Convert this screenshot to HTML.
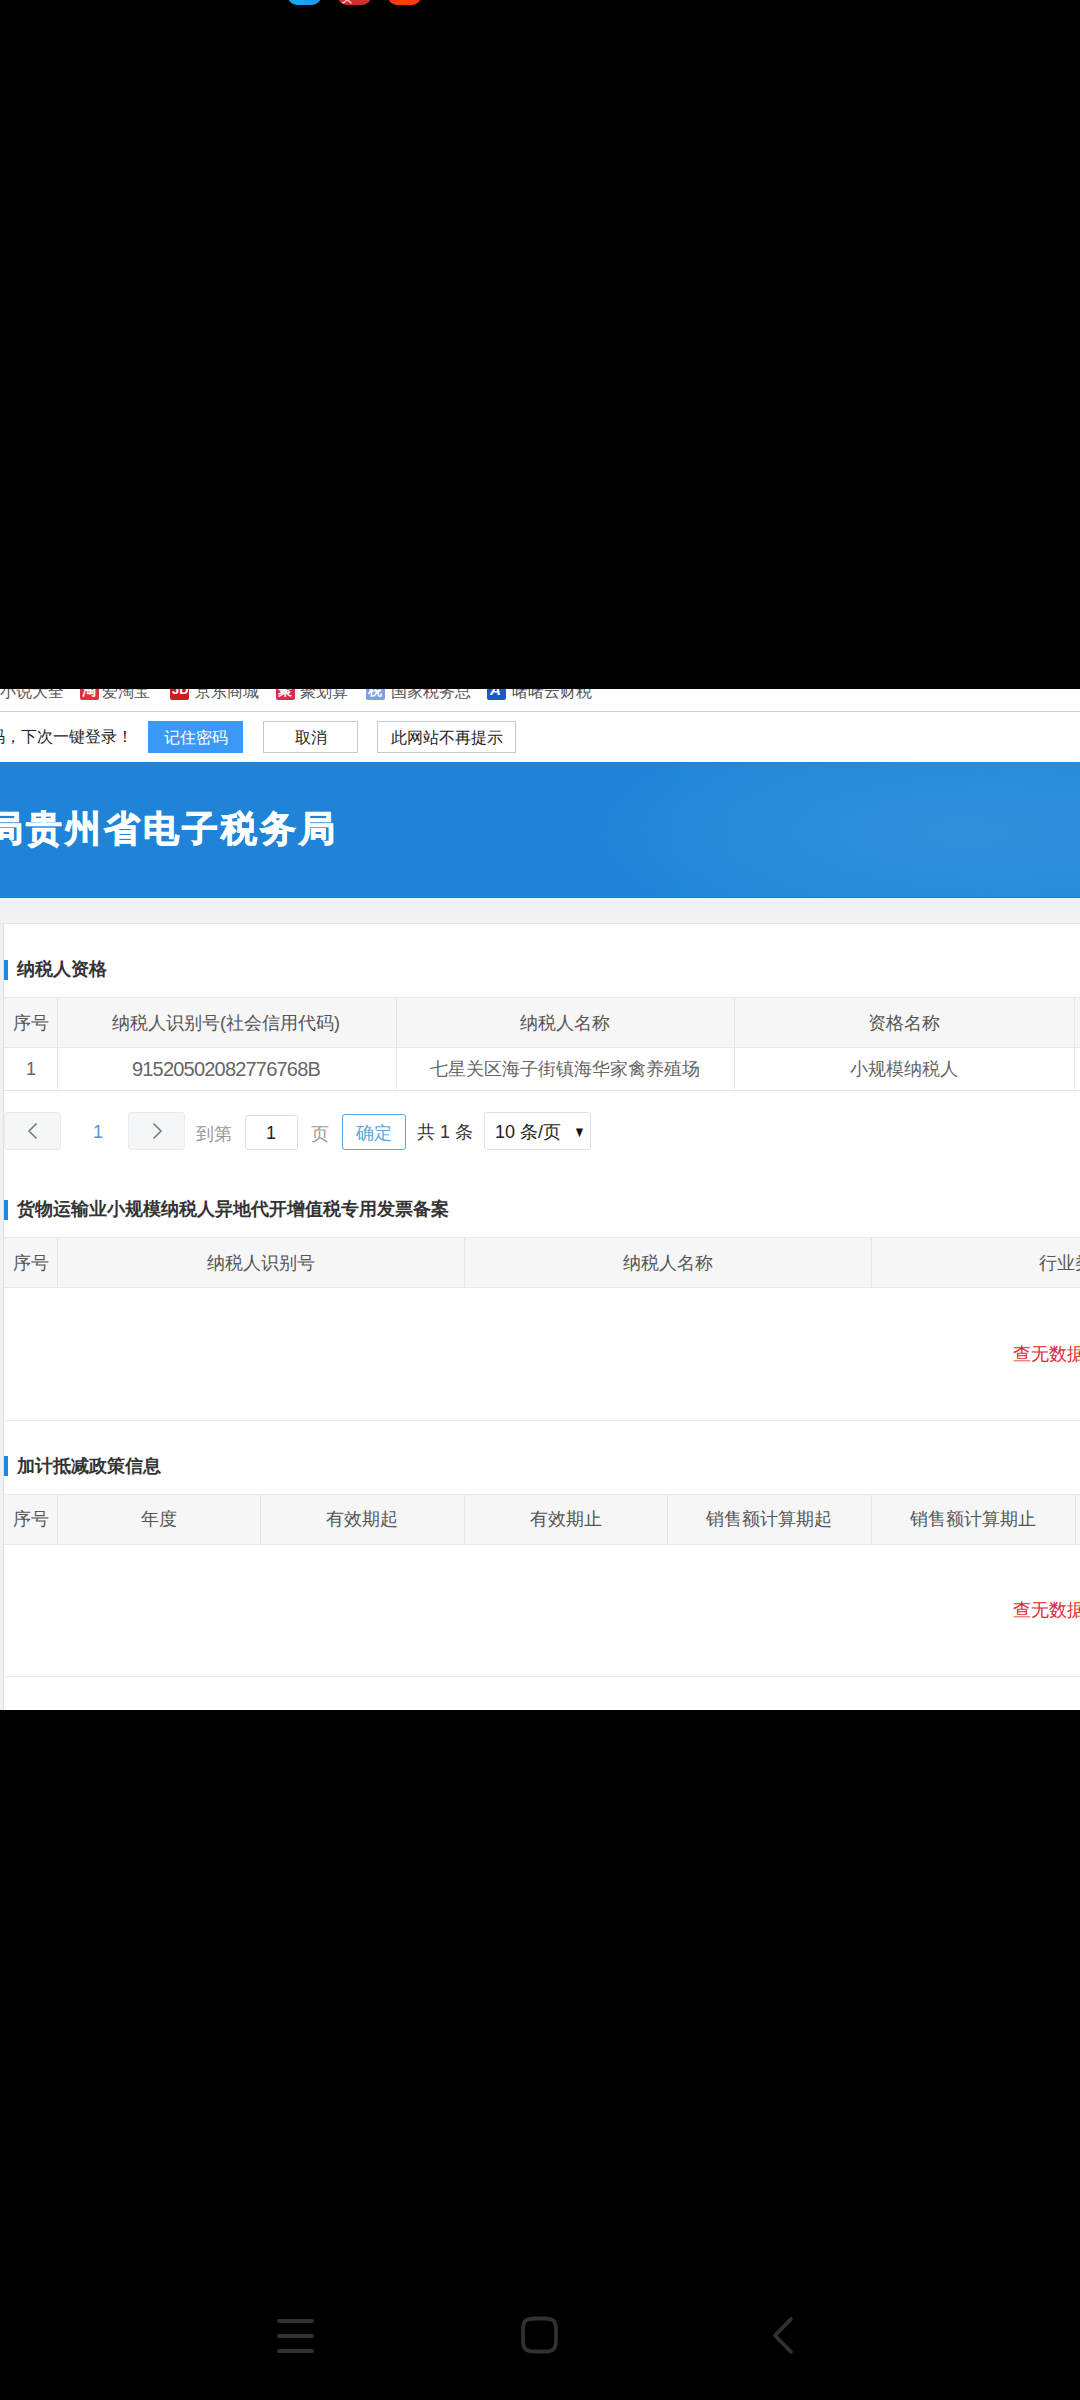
<!DOCTYPE html>
<html><head><meta charset="utf-8">
<style>
*{margin:0;padding:0;box-sizing:border-box}
html,body{width:1080px;height:2400px;background:#000;overflow:hidden;font-family:"Liberation Sans",sans-serif}
.abs{position:absolute}
.appicon{position:absolute;top:-28px;width:33px;height:33px;border-radius:9px}
#shot{position:absolute;left:0;top:689px;width:1080px;height:1021px;background:#fff;overflow:hidden}
.bm{position:absolute;top:-9.5px;font-size:16px;color:#555;white-space:nowrap;line-height:24px}
.bmi{position:absolute;top:-8px;width:19px;height:19px;border-radius:2px;overflow:hidden}
.ig{position:absolute;left:2px;top:1px;font-size:14px;line-height:16px;color:#fff;font-weight:bold}
.btn{position:absolute;top:32px;height:32px;border:1px solid #c8c8c8;background:#fff;font-size:15.5px;color:#222;text-align:center;line-height:32px}
#hdr{position:absolute;left:0;top:73px;width:1080px;height:136px;background:radial-gradient(ellipse 380px 110px at 960px 70px,rgba(255,255,255,0.07),rgba(255,255,255,0) 100%),linear-gradient(90deg,#1f83d8 0,#1f83d8 50%,#2187d9 70%,#2489da 100%);border-bottom:1px solid #2877c2}
#strip{position:absolute;left:0;top:209px;width:1080px;height:26px;background:linear-gradient(#eef3f6,#eff0f2 40%,#f1f2f3);border-bottom:1px solid #e4e4e6}
#panel{position:absolute;left:0;top:235px;width:1080px;height:800px;background:#fff}
.lstrip{position:absolute;left:0;top:235px;width:3px;height:800px;background:#f1f1f1}
.lborder{position:absolute;left:3px;top:235px;width:1px;height:800px;background:#e0e0e0}
.bar{position:absolute;left:4px;width:4px;height:20px;background:#1e88e5}
.ttl{position:absolute;left:17px;font-size:18px;font-weight:bold;color:#333;white-space:nowrap;line-height:20px}
.th{position:absolute;height:51px;background:#f6f6f6;border-top:1px solid #e8e8e8;border-bottom:1px solid #e8e8e8}
.vl{position:absolute;width:1px;background:#e6e6e6}
.hl{position:absolute;height:1px;background:#e6e6e6}
.tx{position:absolute;white-space:nowrap;font-size:18px;color:#555;line-height:20px}
.c{transform:translateX(-50%)}
.nodata{position:absolute;left:1013px;font-size:18px;color:#de2a32;white-space:nowrap;line-height:20px}
</style></head><body>
<!-- top app icons -->
<div class="appicon" style="left:288px;background:linear-gradient(90deg,#16b0f6,#1d95ee)"></div>
<div class="appicon" style="left:338px;background:#d42e2c;overflow:hidden"><span style="position:absolute;left:3px;top:21px;font-size:11px;line-height:11px;color:#f8c8c8;font-weight:bold">头</span></div>
<div class="appicon" style="left:388px;background:#ff3a12"></div>

<div id="shot">
  <!-- bookmarks bar -->
  <div class="bm" style="left:0">小说大全</div>
  <div class="bmi" style="left:80px;background:#e03040"><span class="ig">淘</span></div>
  <div class="bm" style="left:102px">爱淘宝</div>
  <div class="bmi" style="left:170px;background:#c82020"><span class="ig" style="font-family:'Liberation Sans',sans-serif;font-weight:bold;font-size:13px;left:2px">JD</span></div>
  <div class="bm" style="left:195px">京东商城</div>
  <div class="bmi" style="left:276px;background:#e0284a"><span class="ig">聚</span></div>
  <div class="bm" style="left:300px">聚划算</div>
  <div class="bmi" style="left:366px;background:#7b9ee8"><span class="ig">税</span></div>
  <div class="bm" style="left:391px">国家税务总</div>
  <div class="bmi" style="left:487px;background:#1a58c8"><span class="ig" style="font-family:'Liberation Sans',sans-serif;font-weight:bold;font-style:italic;font-size:15px;left:3px">A</span></div>
  <div class="bm" style="left:512px">啫啫云财税</div>
  <div class="hl" style="left:0;top:22px;width:1080px;background:#d0d0d0"></div>

  <!-- save password bar -->
  <div class="tx" style="left:-11px;top:38px;font-size:15.5px;color:#222">码，下次一键登录！</div>
  <div class="btn" style="left:148px;width:95px;background:#3b99f5;border-color:#3b99f5;color:#fff">记住密码</div>
  <div class="btn" style="left:263px;width:95px">取消</div>
  <div class="btn" style="left:377px;width:139px">此网站不再提示</div>

  <!-- header -->
  <div id="hdr">
    <div class="tx" style="left:-13px;top:47px;font-size:36px;font-weight:bold;-webkit-text-stroke:0.9px #fff;color:#fff;line-height:40px;letter-spacing:3px">局贵州省电子税务局</div>
  </div>
  <div id="strip"></div>
  <div id="panel"></div>
  <div class="lstrip"></div>
  <div class="lborder"></div>

  <!-- section 1 -->
  <div class="bar" style="top:271px"></div>
  <div class="ttl" style="top:270px">纳税人资格</div>
  <div class="th" style="left:4px;top:308px;width:1076px"></div>
  <div class="vl" style="left:57px;top:309px;height:92px"></div>
  <div class="vl" style="left:396px;top:309px;height:92px"></div>
  <div class="vl" style="left:734px;top:309px;height:92px"></div>
  <div class="vl" style="left:1074px;top:309px;height:92px"></div>
  <div class="hl" style="left:4px;top:401px;width:1076px"></div>
  <div class="tx c" style="left:31px;top:324px">序号</div>
  <div class="tx c" style="left:226px;top:324px">纳税人识别号(社会信用代码)</div>
  <div class="tx c" style="left:565px;top:324px">纳税人名称</div>
  <div class="tx c" style="left:904px;top:324px">资格名称</div>
  <div class="tx c" style="left:31px;top:370px;font-size:18px;color:#666">1</div>
  <div class="tx c" style="left:226px;top:370px;font-size:20px;letter-spacing:-0.8px;color:#666">91520502082776768B</div>
  <div class="tx c" style="left:565px;top:370px;color:#666">七星关区海子街镇海华家禽养殖场</div>
  <div class="tx c" style="left:904px;top:370px;color:#666">小规模纳税人</div>

  <!-- pagination -->
  <div class="abs" style="left:4px;top:423px;width:57px;height:38px;background:#f5f6f7;border:1px solid #ebebeb;border-radius:3px"></div>
  <div class="abs" style="left:128px;top:423px;width:57px;height:38px;background:#f5f6f7;border:1px solid #ebebeb;border-radius:3px"></div>
  <svg class="abs" style="left:20px;top:430px" width="26" height="24"><path d="M16.5 4.5 L9 12 L16.5 19.5" stroke="#7a7a7a" stroke-width="1.6" fill="none"/></svg>
  <svg class="abs" style="left:144px;top:430px" width="26" height="24"><path d="M9.5 4.5 L17 12 L9.5 19.5" stroke="#7a7a7a" stroke-width="1.6" fill="none"/></svg>
  <div class="tx" style="left:93px;top:433px;font-size:18px;color:#4f99d6">1</div>
  <div class="tx" style="left:196px;top:435px;color:#999">到第</div>
  <div class="abs" style="left:245px;top:426px;width:53px;height:35px;border:1px solid #dcdfe6;border-radius:3px"></div>
  <div class="tx" style="left:266px;top:434px;font-size:18px;color:#222">1</div>
  <div class="tx" style="left:311px;top:435px;color:#999">页</div>
  <div class="abs" style="left:342px;top:425px;width:64px;height:36px;border:1px solid #5aa5e0;border-radius:3px"></div>
  <div class="tx" style="left:356px;top:434px;color:#5aa5e0">确定</div>
  <div class="tx" style="left:417px;top:433px;color:#333;font-size:18px">共 1 条</div>
  <div class="abs" style="left:484px;top:423px;width:107px;height:38px;border:1px solid #e0e0e0;border-radius:3px"></div>
  <div class="tx" style="left:495px;top:433px;color:#222;font-size:18px">10 条/页</div>
  <div class="tx" style="left:572px;top:432.5px;color:#111;font-size:15px;transform:scaleX(0.8)">▼</div>

  <!-- section 2 -->
  <div class="bar" style="top:511px"></div>
  <div class="ttl" style="top:510px">货物运输业小规模纳税人异地代开增值税专用发票备案</div>
  <div class="th" style="left:4px;top:548px;width:1076px"></div>
  <div class="vl" style="left:57px;top:549px;height:50px"></div>
  <div class="vl" style="left:464px;top:549px;height:50px"></div>
  <div class="vl" style="left:871px;top:549px;height:50px"></div>
  <div class="tx c" style="left:31px;top:564px">序号</div>
  <div class="tx c" style="left:261px;top:564px">纳税人识别号</div>
  <div class="tx c" style="left:668px;top:564px">纳税人名称</div>
  <div class="tx" style="left:1039px;top:564px">行业类型</div>
  <div class="nodata" style="top:655px">查无数据</div>
  <div class="hl" style="left:4px;top:731px;width:1076px"></div>

  <!-- section 3 -->
  <div class="bar" style="top:767px"></div>
  <div class="ttl" style="top:767px">加计抵减政策信息</div>
  <div class="th" style="left:4px;top:805px;width:1076px"></div>
  <div class="vl" style="left:57px;top:806px;height:50px"></div>
  <div class="vl" style="left:260px;top:806px;height:50px"></div>
  <div class="vl" style="left:464px;top:806px;height:50px"></div>
  <div class="vl" style="left:667px;top:806px;height:50px"></div>
  <div class="vl" style="left:871px;top:806px;height:50px"></div>
  <div class="vl" style="left:1075px;top:806px;height:50px"></div>
  <div class="tx c" style="left:31px;top:820px">序号</div>
  <div class="tx c" style="left:159px;top:820px">年度</div>
  <div class="tx c" style="left:362px;top:820px">有效期起</div>
  <div class="tx c" style="left:566px;top:820px">有效期止</div>
  <div class="tx c" style="left:769px;top:820px">销售额计算期起</div>
  <div class="tx c" style="left:973px;top:820px">销售额计算期止</div>
  <div class="nodata" style="top:911px">查无数据</div>
  <div class="hl" style="left:4px;top:987px;width:1076px"></div>
</div>

<!-- nav bar -->
<svg class="abs" style="left:0;top:2290px" width="1080" height="90">
  <g stroke="#313131" stroke-width="3.8" stroke-linecap="round" fill="none">
    <line x1="279" y1="31" x2="312" y2="31"/>
    <line x1="279" y1="46" x2="312" y2="46"/>
    <line x1="279" y1="61" x2="312" y2="61"/>
    <path d="M535 28.5 L544 28.5 C553.6 28.5 556 30.9 556 40.5 L556 49.5 C556 59.1 553.6 61.5 544 61.5 L535 61.5 C525.4 61.5 523 59.1 523 49.5 L523 40.5 C523 30.9 525.4 28.5 535 28.5 Z"/>
    <path d="M791 29 L775 45.5 L791 62" stroke-linejoin="round"/>
  </g>
</svg>
</body></html>
